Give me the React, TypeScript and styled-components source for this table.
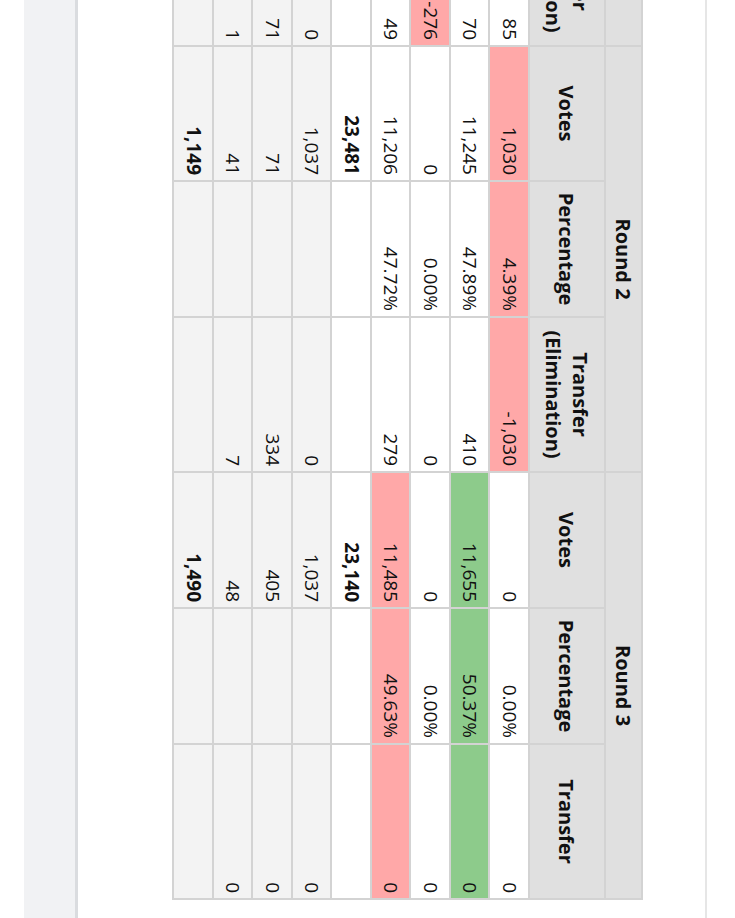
import styled, { createGlobalStyle } from "styled-components";

const GlobalStyle = createGlobalStyle`
  html {
    overflow: hidden;
  }
  body {
    margin: 0;
    padding: 0;
    height: 918px;
    background: #ffffff;
  }
`;

// the reference is a photo of the page turned a quarter turn clockwise
const Page = styled.div`
  width: 918px;
  height: 735px;
  transform-origin: 0 0;
  transform: translateX(735px) rotate(90deg);
  display: flex;
  flex-direction: column;
  background: #ffffff;
  font-family: "Open Sans", "Noto Sans", sans-serif;
  color: #111111;
`;

const TopStrip = styled.div`
  height: 28px;
  flex-shrink: 0;
  border-bottom: 2px solid #e6e6e6;
`;

const Main = styled.div`
  flex: 1;
  padding-top: 62px;
  overflow: hidden;
`;

const Footer = styled.div`
  height: 51px;
  flex-shrink: 0;
  margin-bottom: 24px;
  border-top: 3px solid #dadcdf;
  background: #f1f2f4;
`;

const Table = styled.table`
  /* scrolled so only the tail of the round 1 transfer column shows */
  margin-left: -110px;
  border-collapse: collapse;
  table-layout: fixed;
  width: 1007px;
  font-size: 19px;
`;

const HeadCell = styled.th<{ $tall?: boolean }>`
  background: #e0e0e0;
  border: 2px solid #d3d3d3;
  font-size: 20px;
  font-weight: 700;
  text-align: center;
  line-height: 27px;
  padding: ${(p) => (p.$tall ? "10px 6px" : "4px 6px")};
`;

const Row = styled.tr<{ $muted?: boolean }>`
  background: ${(p) => (p.$muted ? "#f3f3f3" : "#ffffff")};
`;

type Tone = "loss" | "win" | undefined;

const toneColor = (t: Tone) =>
  t === "loss" ? "#ffa8a8" : t === "win" ? "#8dcb8b" : "transparent";

const Cell = styled.td<{ $tone?: Tone; $bold?: boolean }>`
  border: 2px solid #d3d3d3;
  background: ${(p) => toneColor(p.$tone)};
  font-weight: ${(p) => (p.$bold ? 700 : 400)};
  text-align: right;
  line-height: 27.5px;
  padding: 5px 5px;
  white-space: nowrap;
`;

type Value = { v: string; tone?: Tone };

type DataRow = { muted?: boolean; bold?: boolean; cells: Value[] };

const rows: DataRow[] = [
  {
    cells: [
      { v: "85" },
      { v: "1,030", tone: "loss" },
      { v: "4.39%", tone: "loss" },
      { v: "-1,030", tone: "loss" },
      { v: "0" },
      { v: "0.00%" },
      { v: "0" },
    ],
  },
  {
    cells: [
      { v: "70" },
      { v: "11,245" },
      { v: "47.89%" },
      { v: "410" },
      { v: "11,655", tone: "win" },
      { v: "50.37%", tone: "win" },
      { v: "0", tone: "win" },
    ],
  },
  {
    cells: [
      { v: "-276", tone: "loss" },
      { v: "0" },
      { v: "0.00%" },
      { v: "0" },
      { v: "0" },
      { v: "0.00%" },
      { v: "0" },
    ],
  },
  {
    cells: [
      { v: "49" },
      { v: "11,206" },
      { v: "47.72%" },
      { v: "279" },
      { v: "11,485", tone: "loss" },
      { v: "49.63%", tone: "loss" },
      { v: "0", tone: "loss" },
    ],
  },
  {
    bold: true,
    cells: [{ v: "" }, { v: "23,481" }, { v: "" }, { v: "" }, { v: "23,140" }, { v: "" }, { v: "" }],
  },
  {
    muted: true,
    cells: [{ v: "0" }, { v: "1,037" }, { v: "" }, { v: "0" }, { v: "1,037" }, { v: "" }, { v: "0" }],
  },
  {
    muted: true,
    cells: [{ v: "71" }, { v: "71" }, { v: "" }, { v: "334" }, { v: "405" }, { v: "" }, { v: "0" }],
  },
  {
    muted: true,
    cells: [{ v: "1" }, { v: "41" }, { v: "" }, { v: "7" }, { v: "48" }, { v: "" }, { v: "0" }],
  },
  {
    muted: true,
    bold: true,
    cells: [{ v: "" }, { v: "1,149" }, { v: "" }, { v: "" }, { v: "1,490" }, { v: "" }, { v: "" }],
  },
];

const widths = [155, 135, 136, 155, 136, 136, 155];

export default function App() {
  return (
    <>
      <GlobalStyle />
      <Page>
        <TopStrip />
        <Main>
          <Table>
            <colgroup>
              {widths.map((w, i) => (
                <col key={i} style={{ width: w }} />
              ))}
            </colgroup>
            <thead>
              <tr>
                <HeadCell />
                <HeadCell colSpan={3}>Round 2</HeadCell>
                <HeadCell colSpan={3}>Round 3</HeadCell>
              </tr>
              <tr>
                <HeadCell $tall>
                  Transfer
                  <br />
                  (Elimination)
                </HeadCell>
                <HeadCell $tall>Votes</HeadCell>
                <HeadCell $tall>Percentage</HeadCell>
                <HeadCell $tall>
                  Transfer
                  <br />
                  (Elimination)
                </HeadCell>
                <HeadCell $tall>Votes</HeadCell>
                <HeadCell $tall>Percentage</HeadCell>
                <HeadCell $tall>Transfer</HeadCell>
              </tr>
            </thead>
            <tbody>
              {rows.map((r, ri) => (
                <Row key={ri} $muted={r.muted}>
                  {r.cells.map((c, ci) => (
                    <Cell key={ci} $tone={c.tone} $bold={r.bold}>
                      {c.v}
                    </Cell>
                  ))}
                </Row>
              ))}
            </tbody>
          </Table>
        </Main>
        <Footer />
      </Page>
    </>
  );
}
